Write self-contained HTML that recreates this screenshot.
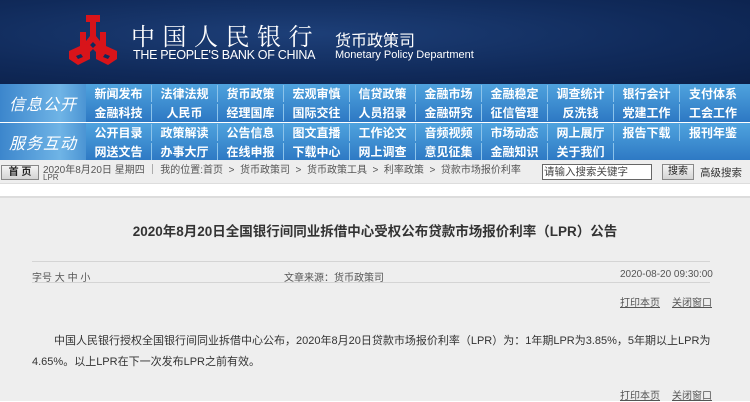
<!DOCTYPE html>
<html><head><meta charset="utf-8"><style>
*{margin:0;padding:0;box-sizing:border-box}
body{width:750px;height:401px;overflow:hidden;background:#fff;font-family:"Liberation Sans","Noto Sans CJK SC",sans-serif}
#hd{position:absolute;left:0;top:0;width:750px;height:84px;background:radial-gradient(ellipse at 40% 40%,#1d3f78 0%,#102a5a 60%,#0b2049 100%)}
.cn{position:absolute;left:131px;top:17px;color:#fff;font-size:24px;letter-spacing:7.5px;font-family:"Noto Serif CJK SC",serif;white-space:nowrap}
.en{position:absolute;left:133px;top:48px;color:#fff;font-size:12.5px;letter-spacing:-0.3px;white-space:nowrap}
.dcn{position:absolute;left:335px;top:27px;color:#fff;font-size:16px;white-space:nowrap}
.den{position:absolute;left:335px;top:49px;color:#fff;font-size:11px;white-space:nowrap}
.grp{position:absolute;left:0;width:750px;height:38px;background:linear-gradient(#4fa3de,#2d78c3)}
.lbl{position:absolute;left:0;top:0;width:86px;height:38px;background:linear-gradient(90deg,#3c86cc,#6fb4e6 70%,#4b94d3);color:#fff;font-style:italic;font-size:16px;line-height:38px;text-align:center;letter-spacing:1px;font-family:"Noto Sans CJK SC",sans-serif}
.row{position:absolute;left:86px;height:19px;display:flex}
.row span{width:66px;text-align:center;color:#fff;font-size:12px;font-weight:bold;line-height:17px;margin:1px 0;border-right:1px solid #8cc3ea;font-family:"Noto Sans CJK SC",sans-serif}
.row span:last-child{border-right:none}
#bc{position:absolute;left:0;top:160px;width:750px;height:24px;background:#eee;border-bottom:1px solid #ddd;font-size:10px;color:#555}
.btn{position:absolute;border:1px solid #888;background:linear-gradient(#f4f4f4,#d4d4d4);font-size:10px;text-align:center;color:#222}
#ct{position:absolute;left:0;top:196px;width:750px;height:205px;background:#eee;border-top:2px solid #dcdcdc}
.t{position:absolute;left:0;width:750px;text-align:center;top:22px;font-size:13.5px;font-weight:bold;color:#333}
.hr{position:absolute;left:32px;width:678px;height:1px;background:#d4d4d4}
.s{position:absolute;font-size:10px;color:#555;white-space:nowrap}
.u{text-decoration:underline}
.p{position:absolute;left:32px;font-size:11px;color:#333;line-height:21px;white-space:nowrap}
</style></head><body>
<div id="hd">
<svg style="position:absolute;left:65px;top:15px" width="56" height="50" viewBox="0 0 56 50">
<path fill="#d8141a" d="M21 0h14v7h-4v14l4 5v-9h6v14l11 5v8l-9 6-12-6v-7l-3-3-3 3v7l-12 6-9-6v-8l11-5V17h6v9l4-5V7h-4z"/>
<path fill="#0f2a5c" d="M25 30l3-3 3 3-3 3zM11 41l5-2 2 3-5 2zM45 41l-5-2-2 3 5 2z"/>
</svg>
<div class="cn">中国人民银行</div>
<div class="en">THE PEOPLE'S BANK OF CHINA</div>
<div class="dcn">货币政策司</div>
<div class="den">Monetary Policy Department</div>
</div>
<div class="grp" style="top:84px"><div class="lbl">信息公开</div>
<div class="row" style="top:0px"><span>新闻发布</span><span>法律法规</span><span>货币政策</span><span>宏观审慎</span><span>信贷政策</span><span>金融市场</span><span>金融稳定</span><span>调查统计</span><span>银行会计</span><span>支付体系</span></div>
<div class="row" style="top:19px"><span>金融科技</span><span>人民币</span><span>经理国库</span><span>国际交往</span><span>人员招录</span><span>金融研究</span><span>征信管理</span><span>反洗钱</span><span>党建工作</span><span>工会工作</span></div>
</div>
<div class="grp" style="top:123px"><div class="lbl">服务互动</div>
<div class="row" style="top:0px"><span>公开目录</span><span>政策解读</span><span>公告信息</span><span>图文直播</span><span>工作论文</span><span>音频视频</span><span>市场动态</span><span>网上展厅</span><span>报告下载</span><span>报刊年鉴</span></div>
<div class="row" style="top:19px"><span>网送文告</span><span>办事大厅</span><span>在线申报</span><span>下载中心</span><span>网上调查</span><span>意见征集</span><span>金融知识</span><span>关于我们</span><span style="border:none"></span><span style="border:none"></span></div>
</div>
<div id="bc">
<div class="btn" style="left:1px;top:5px;width:38px;height:15px;line-height:13px;font-weight:bold">首 页</div>
<div class="s" style="left:43px;top:1px;font-size:10px">2020年8月20日 星期四 ｜ 我的位置:首页 &nbsp;&gt;&nbsp; 货币政策司 &nbsp;&gt;&nbsp; 货币政策工具 &nbsp;&gt;&nbsp; 利率政策 &nbsp;&gt;&nbsp; 贷款市场报价利率</div>
<div class="s" style="left:43px;top:13px;font-size:8px">LPR</div>
<div style="position:absolute;left:542px;top:4px;width:110px;height:16px;border:1px solid #666;background:#fff;font-size:10.5px;color:#444;line-height:14px;padding-left:1px">请输入搜索关键字</div>
<div class="btn" style="left:662px;top:4px;width:32px;height:16px;line-height:14px">搜索</div>
<div class="s" style="left:700px;top:5px;color:#333;font-size:10.5px">高级搜索</div>
</div>
<div id="ct">
<div class="t">2020年8月20日全国银行间同业拆借中心受权公布贷款市场报价利率（LPR）公告</div>
<div class="hr" style="top:63px"></div>
<div class="s" style="left:32px;top:71px">字号 <span class="u">大</span> <span class="u">中</span> <span class="u">小</span></div>
<div class="s" style="left:284px;top:71px">文章来源：货币政策司</div>
<div class="s" style="left:620px;top:71px">2020-08-20 09:30:00</div>
<div class="hr" style="top:84px"></div>
<div class="s u" style="left:620px;top:96px">打印本页</div>
<div class="s u" style="left:672px;top:96px">关闭窗口</div>
<div class="p" style="top:133px;left:54px">中国人民银行授权全国银行间同业拆借中心公布，2020年8月20日贷款市场报价利率（LPR）为：1年期LPR为3.85%，5年期以上LPR为</div>
<div class="p" style="top:154px">4.65%。以上LPR在下一次发布LPR之前有效。</div>
<div class="s u" style="left:620px;top:189px">打印本页</div>
<div class="s u" style="left:672px;top:189px">关闭窗口</div>
</div>
</body></html>
